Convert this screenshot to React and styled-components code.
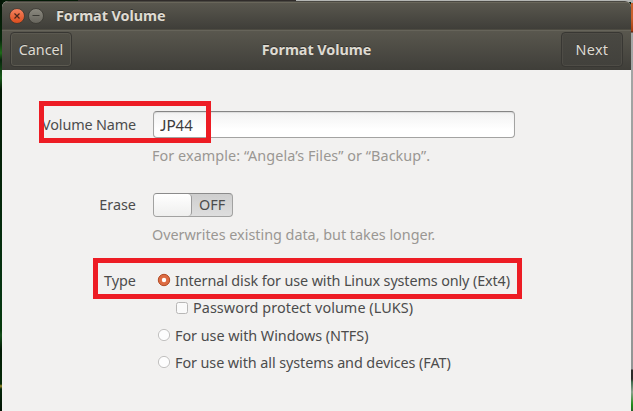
import React from "react";
import styled, { createGlobalStyle } from "styled-components";

const GlobalStyle = createGlobalStyle`
  * { box-sizing: border-box; }
  body {
    margin: 0;
    overflow: hidden;
    font-family: "Noto Sans", "Open Sans", sans-serif;
    font-size: 14.4px;
    color: #4c4c4c;
  }
`;

const Desktop = styled.div`
  width: 633px;
  height: 411px;
  padding: 1px 2px 0;
  background:
    linear-gradient(#302c2a, #302c2a) 78px 0 / 218px 2px no-repeat,
    linear-gradient(#b4b6b4, #b4b6b4) 296px 0 / 337px 2px no-repeat,
    linear-gradient(#a9aaa9 0 3px, #c9602c 3px 18px, #a63b10 31px, #4b1708 32px, #a5a7a6 33px, #929594 369px, #2c2a28 370px 379px, #3f6b4c 382px, #8aa28c 392px, #1f8a17 405px, #26652a) 631px 0 / 2px 411px no-repeat,
    linear-gradient(#031304, #06280a 40px, #1e6b18 53px, #06250b 60px, #1a5c1a 78px, #031804 90px, #063612 300px, #063a0c 330px, #14501a 335px, #021a05 350px, #052b08 384px, #9b8b2a 386px, #04270a 389px, #021304) 0 0 / 2px 411px no-repeat,
    #041a06;
`;

const Window = styled.main`
  position: relative;
  width: 629px;
  height: 410px;
  border-radius: 6px 6px 0 0;
  overflow: hidden;
  background: #f2f1f0;
`;

const TitleBar = styled.header`
  display: flex;
  align-items: center;
  gap: 3px;
  height: 28px;
  padding: 1px 0 0 7px;
  border-top: 1px solid #4a4842;
  background: linear-gradient(#69665a 0 1px, #59574e 1px, #3f3e39);
`;

const ControlIcon = styled.svg`
  width: 16px;
  height: 16px;
  flex: none;
`;

const Toolbar = styled.div`
  display: flex;
  align-items: flex-start;
  justify-content: space-between;
  height: 41px;
  padding: 3px 8px;
  background: linear-gradient(#4d4b42 0 1px, #66645a 1px 2px, #59574e 2px, #3f3e39);
`;

const Title = styled.h1`
  margin: ${(p) => p.$margin};
  font-size: 14.4px;
  font-weight: 700;
  line-height: 20px;
  letter-spacing: ${(p) => p.$track};
  white-space: nowrap;
  color: #dfdbd2;
  text-shadow: 0 -1px 0 #33322e;
`;

const ToolButton = styled.button`
  width: 62px;
  height: 35px;
  padding: 0 0 1px;
  border: 1px solid #383733;
  border-radius: 4px;
  background: ${(p) => (p.$dark ? "linear-gradient(#494842, #42413c)" : "linear-gradient(#525047, #45443e)")};
  box-shadow: inset 0 0 0 1px ${(p) => (p.$dark ? "#4e4c46" : "#5b5950")};
  font: inherit;
  letter-spacing: ${(p) => p.$track};
  color: #dfdbd2;
  text-shadow: 0 -1px 0 #393833;
`;

const Form = styled.form`
  display: flex;
  flex-direction: column;
  padding-top: 41px;
`;

const Row = styled.div`
  display: grid;
  grid-template-columns: 134px 1fr;
  column-gap: 17px;
  align-items: center;
  height: ${(p) => p.$height}px;
  margin-bottom: ${(p) => p.$after || 0}px;
`;

const Label = styled.span`
  justify-self: end;
  line-height: 20px;
  white-space: nowrap;
  letter-spacing: ${(p) => p.$track};
`;

const Entry = styled.input`
  width: 362px;
  height: 27px;
  padding: 0 6px;
  border: 1px solid #a3a3a2;
  border-top-color: #858585;
  border-radius: 4px;
  outline: none;
  background: linear-gradient(#f2f2f2, #ffffff 70%);
  box-shadow: inset 0 1px 1px #dcdcdc;
  font-family: Lato, sans-serif;
  font-size: 15px;
  letter-spacing: ${(p) => p.$track};
  color: #3c3c3c;
`;

const Hint = styled.p`
  grid-column: 2;
  margin: 0 0 0 -1px;
  line-height: 20px;
  white-space: nowrap;
  letter-spacing: ${(p) => p.$track};
  color: #9a9793;
`;

const Switch = styled.div`
  display: flex;
  width: 80px;
  height: 24px;
  border: 1px solid #a2a2a1;
  border-top-color: #8b8b8b;
  border-radius: 4px;
  background: linear-gradient(#cecece, #dedede);
`;

const Knob = styled.span`
  width: 38px;
  border-right: 1px solid #9b9b9b;
  border-radius: 3px 4px 4px 3px;
  background: linear-gradient(#ffffff, #efefee);
`;

const SwitchText = styled.span`
  flex: 1;
  padding-left: 7px;
  line-height: 22px;
  letter-spacing: ${(p) => p.$track};
`;

const Choice = styled.label`
  display: flex;
  align-items: center;
  gap: 5px;
  padding-left: ${(p) => (p.$nested ? 23 : 5)}px;
  line-height: 20px;
  white-space: nowrap;
  letter-spacing: ${(p) => p.$track};
`;

const Mark = styled.svg`
  width: 12px;
  height: 12px;
  flex: none;
  margin-bottom: ${(p) => p.$lift || 0}px;
  overflow: visible;
`;

const Highlight = styled.div`
  position: absolute;
  left: ${(p) => p.$x}px;
  top: ${(p) => p.$y}px;
  width: ${(p) => p.$w}px;
  height: ${(p) => p.$h}px;
  border: 5px solid #ed1c24;
  pointer-events: none;
`;

function CloseIcon() {
  return (
    <ControlIcon viewBox="0 0 16 16">
      <defs>
        <linearGradient id="close" x2="0" y2="1">
          <stop stopColor="#f58360" />
          <stop offset="1" stopColor="#db4c1c" />
        </linearGradient>
      </defs>
      <circle cx="8" cy="8" r="7.5" fill="url(#close)" stroke="#373630" strokeWidth=".8" />
      <path d="M5.5 5.5l5 5m0-5l-5 5" stroke="#4a271b" strokeWidth="1.2" />
    </ControlIcon>
  );
}

function MinimizeIcon() {
  return (
    <ControlIcon viewBox="0 0 16 16">
      <defs>
        <linearGradient id="minimize" x2="0" y2="1">
          <stop stopColor="#8c8a80" />
          <stop offset="1" stopColor="#66645c" />
        </linearGradient>
      </defs>
      <circle cx="8" cy="8" r="7.5" fill="url(#minimize)" stroke="#373630" strokeWidth=".8" />
      <path d="M4.5 7.5h7" stroke="#3b3a35" />
    </ControlIcon>
  );
}

function Radio({ checked }) {
  return (
    <Mark viewBox="0 0 12 12" $lift={checked ? 1 : 2}>
      {checked ? (
        <>
          <circle cx="6" cy="6" r="5.7" fill="#dd6b42" stroke="#b34c26" />
          <circle cx="6" cy="6" r="2.2" fill="#fff" />
        </>
      ) : (
        <circle cx="6" cy="6" r="5.6" fill="#fdfdfd" stroke="#c2c1c0" />
      )}
    </Mark>
  );
}

function Checkbox() {
  return (
    <Mark viewBox="0 0 12 12">
      <rect x=".5" y=".5" width="11" height="11" rx="2" fill="#fafafa" stroke="#b8b7b6" />
    </Mark>
  );
}

export default function App() {
  return (
    <>
      <GlobalStyle />
      <Desktop>
        <Window>
          <TitleBar>
            <CloseIcon />
            <MinimizeIcon />
            <Title as="span" $margin="0 0 0 9px" $track="-0.06px">Format Volume</Title>
          </TitleBar>
          <Toolbar>
            <ToolButton $track="-0.05px">Cancel</ToolButton>
            <Title $margin="8px 0 0" $track="-0.06px">Format Volume</Title>
            <ToolButton $dark $track="0.3px">Next</ToolButton>
          </Toolbar>
          <Form>
            <Row $height={27}>
              <Label $track="-0.15px">Volume Name</Label>
              <Entry $track="0.1px" defaultValue="JP44" aria-label="Volume Name" />
            </Row>
            <Row $height={36} $after={19}>
              <Hint $track="0.06px">For example: “Angela’s Files” or “Backup”.</Hint>
            </Row>
            <Row $height={24}>
              <Label $track="0px">Erase</Label>
              <Switch>
                <Knob />
                <SwitchText $track="0px">OFF</SwitchText>
              </Switch>
            </Row>
            <Row $height={36} $after={14}>
              <Hint $track="-0.02px">Overwrites existing data, but takes longer.</Hint>
            </Row>
            <Row $height={27}>
              <Label $track="0px">Type</Label>
              <Choice $track="-0.12px"><Radio checked />Internal disk for use with Linux systems only (Ext4)</Choice>
            </Row>
            <Row $height={28}>
              <span />
              <Choice $nested $track="0.05px"><Checkbox />Password protect volume (LUKS)</Choice>
            </Row>
            <Row $height={28}>
              <span />
              <Choice $track="-0.04px"><Radio />For use with Windows (NTFS)</Choice>
            </Row>
            <Row $height={26}>
              <span />
              <Choice $track="-0.08px"><Radio />For use with all systems and devices (FAT)</Choice>
            </Row>
          </Form>
          <Highlight $x={37} $y={100} $w={172} $h={42} />
          <Highlight $x={91} $y={257} $w={429} $h={41} />
        </Window>
      </Desktop>
    </>
  );
}
